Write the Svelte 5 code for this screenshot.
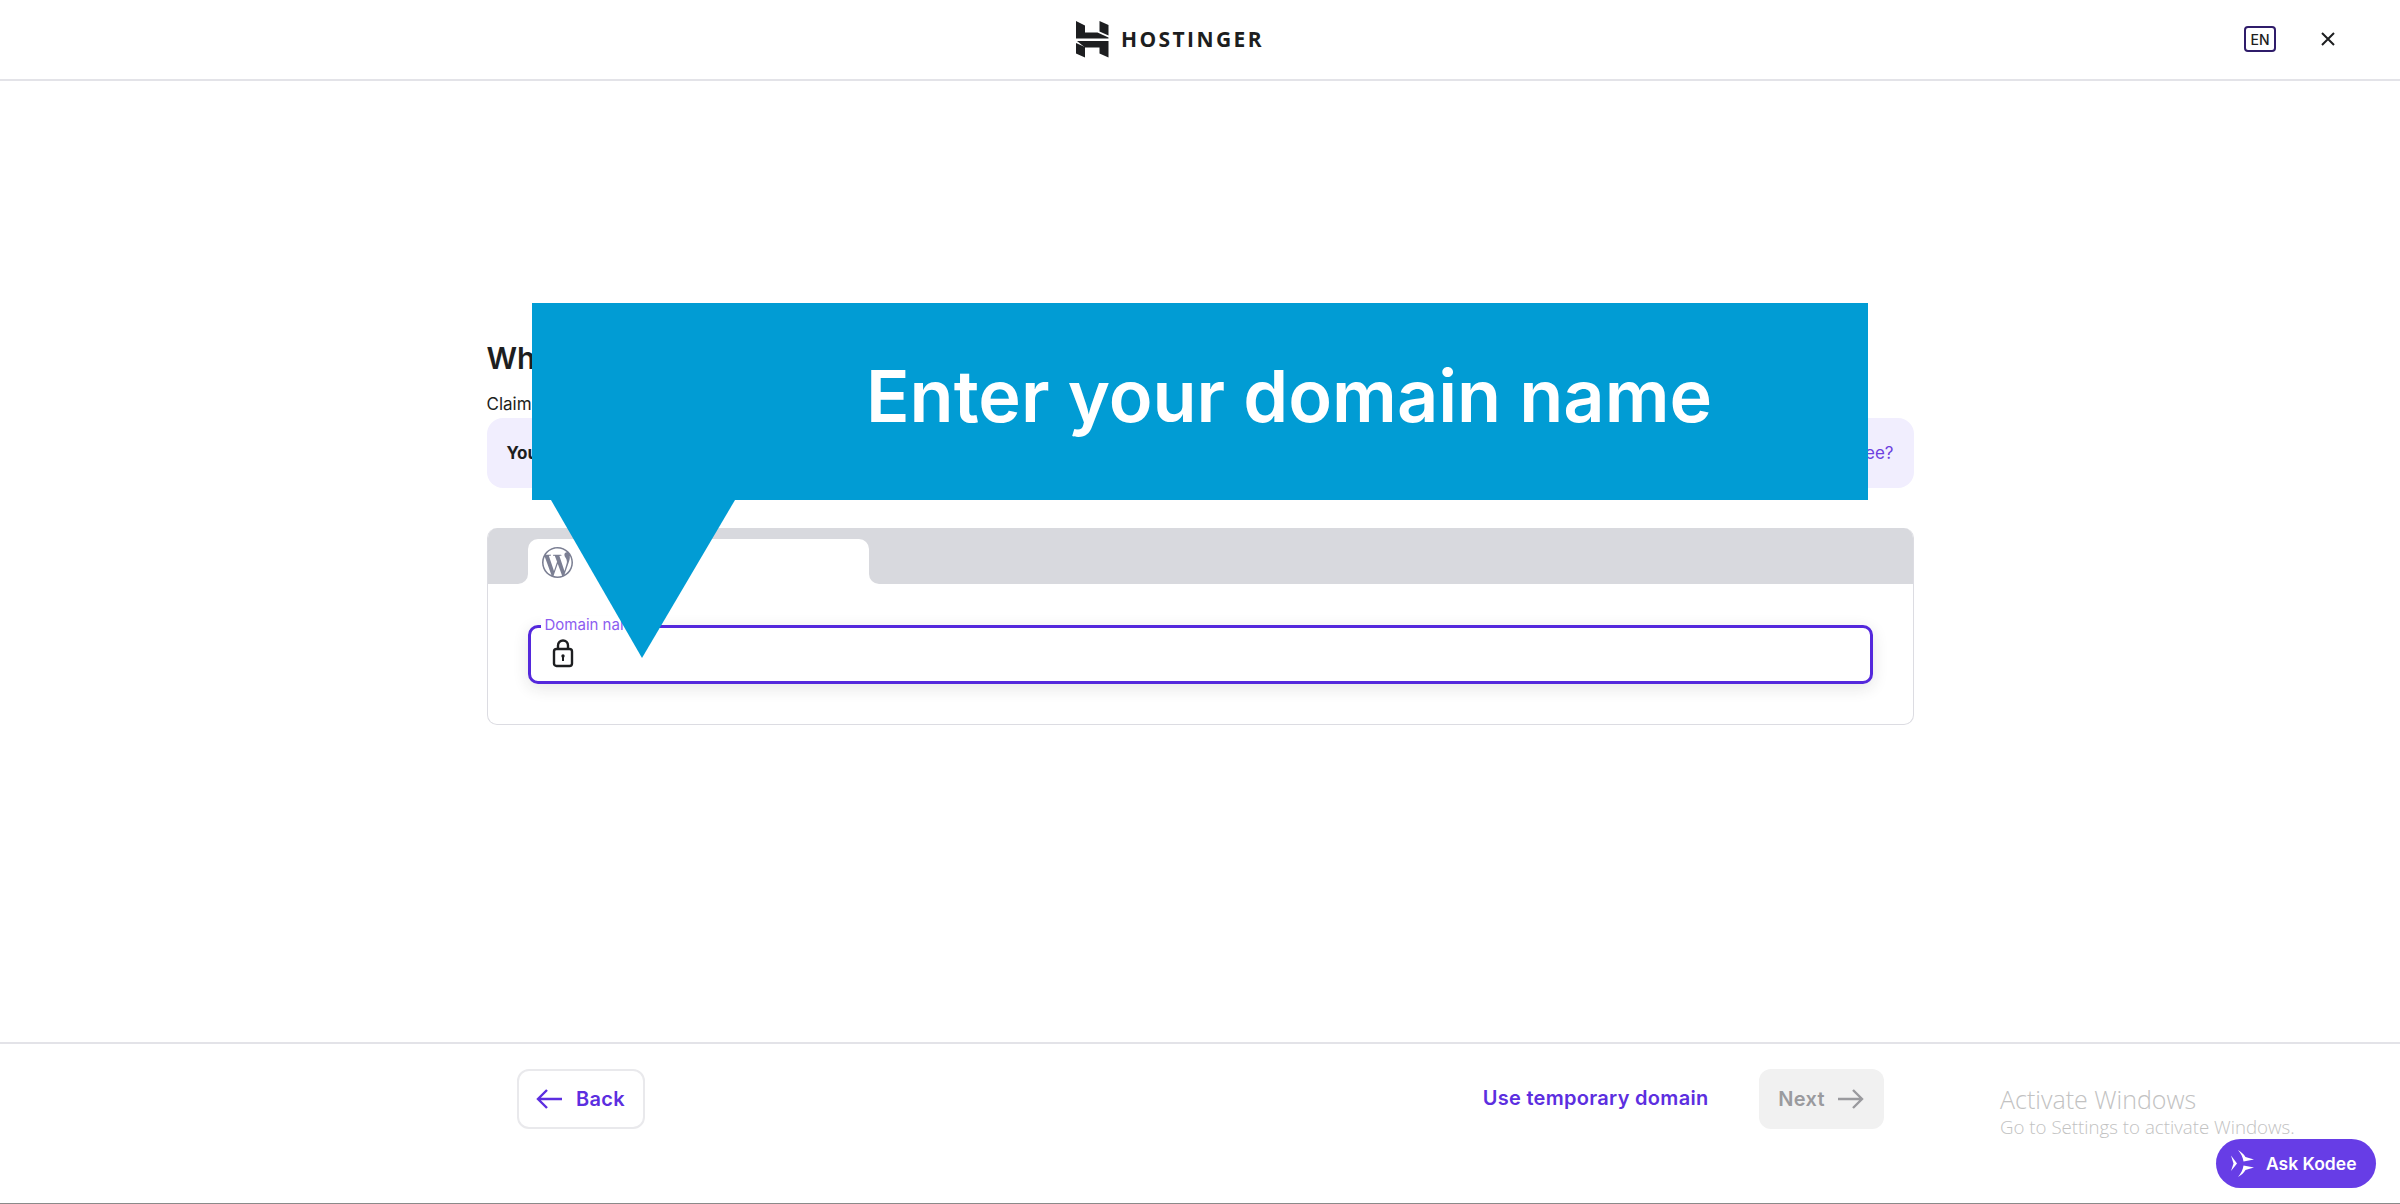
<script lang="ts">
  let domain: string = "";
</script>

<div class="page">
  <header>
    <div class="logo">
      <svg width="33" height="38" viewBox="0 0 33 38" aria-hidden="true">
        <path d="M0 1l9 4.500V12.500H21.500L32.500 17.500V18.500H0z" />
        <path d="M23.500 1L32.500 5V15.500L23.500 11.500z" />
        <path d="M1 21H32.500V37.500L23.500 33.500V27.500H9z" />
        <path d="M0 23L9 27V37.500L0 33.500z" />
      </svg>
      <span>HOSTINGER</span>
    </div>
    <div class="header-actions">
      <span class="lang">EN</span>
      <svg class="close" width="14" height="14" viewBox="0 0 14 14" aria-hidden="true">
        <path d="M1 1l12 12M13 1L1 13" />
      </svg>
    </div>
  </header>

  <main>
    <h1>What is your domain name?</h1>
    <p class="sub">Claim your free domain or connect one you own</p>

    <div class="notice">
      <strong>You have a free domain available</strong>
      <a href="#top">How to get a domain for free?</a>
    </div>

    <div class="card">
      <div class="tabs">
        <div class="tab-left"></div>
        <div class="tab-wrap">
          <div class="tab">
            <svg width="31" height="31" viewBox="0 0 24 24" aria-hidden="true">
              <path d="M21.469 6.825c.84 1.537 1.318 3.3 1.318 5.175 0 3.979-2.156 7.456-5.363 9.325l3.295-9.527c.615-1.54.82-2.771.82-3.864 0-.405-.026-.78-.07-1.11m-7.981.105c.647-.03 1.232-.105 1.232-.105.582-.075.514-.93-.067-.899 0 0-1.755.135-2.88.135-1.064 0-2.85-.15-2.85-.15-.585-.03-.661.855-.075.885 0 0 .54.061 1.125.09l1.68 4.605-2.37 7.08L5.354 6.9c.649-.03 1.234-.1 1.234-.1.585-.075.516-.93-.065-.896 0 0-1.746.138-2.874.138-.2 0-.438-.008-.69-.015C4.911 3.15 8.235 1.215 12 1.215c2.809 0 5.365 1.072 7.286 2.833-.046-.003-.091-.009-.141-.009-1.06 0-1.812.923-1.812 1.914 0 .89.513 1.643 1.06 2.531.411.72.89 1.643.89 2.977 0 .915-.354 1.994-.821 3.479l-1.075 3.585-3.9-11.61.001.014zM12 22.784c-1.059 0-2.081-.153-3.048-.437l3.237-9.406 3.315 9.087c.024.053.05.101.078.149-1.12.393-2.325.609-3.582.609M1.211 12c0-1.564.336-3.05.935-4.39L7.29 21.709C3.694 19.96 1.212 16.271 1.211 12M12 0C5.385 0 0 5.385 0 12s5.385 12 12 12 12-5.385 12-12S18.615 0 12 0" />
            </svg>
          </div>
        </div>
        <div class="tab-right"></div>
      </div>

      <div class="card-body">
        <label class="field">
          <span class="field-label">Domain name</span>
          <svg width="22" height="29" viewBox="0 0 22 29" aria-hidden="true">
            <rect x="2" y="10" width="18" height="17" rx="2.500" />
            <path class="shackle" d="M6 10V6.500a5 5 0 0 1 10 0V10" />
            <circle cx="11" cy="17" r="1.700" />
            <path class="key" d="M11 17v5" />
          </svg>
          <input bind:value={domain} />
        </label>
      </div>
    </div>
  </main>

  <footer>
    <div class="footer-inner">
      <button class="back">
        <svg width="27" height="22" viewBox="0 0 27 22" aria-hidden="true">
          <path d="M26 11H2M11 2l-9 9 9 9" />
        </svg>
        Back
      </button>
      <div class="footer-right">
        <button class="temp">Use temporary domain</button>
        <button class="next" disabled>
          Next
          <svg width="27" height="22" viewBox="0 0 27 22" aria-hidden="true">
            <path d="M1 11h24M16 2l9 9-9 9" />
          </svg>
        </button>
      </div>
    </div>
  </footer>

  <div class="callout">
    <div class="callout-box">Enter your domain name</div>
    <svg class="callout-tip" width="184" height="158" viewBox="0 0 184 158" aria-hidden="true">
      <path d="M0 0H184L91 158z" />
    </svg>
  </div>

  <div class="activate">
    <div class="activate-title">Activate Windows</div>
    <div class="activate-sub">Go to Settings to activate Windows.</div>
  </div>

  <button class="kodee">
    <svg width="23" height="27" viewBox="0 0 23 27" aria-hidden="true">
      <path d="M0 5.500L6 13.500 0 21 2.500 13.500z" />
      <path d="M7 0C10 2 13 4 14.500 7L23 9.500 12.500 11.500C12 7.500 10 3.500 7 0z" />
      <path d="M7 27C10 25 13 23 14.500 20L23 17.500 12.500 15.500C12 19.500 10 23.500 7 27z" />
    </svg>
    Ask Kodee
  </button>
</div>

<style>
  :global(body) {
    margin: 0;
    background: #fff;
  }

  .page {
    position: relative;
    display: flex;
    flex-direction: column;
    height: 1204px;
    box-sizing: border-box;
    border-bottom: 1px solid #8a8a8a;
    overflow: hidden;
    font-family: Inter, "Liberation Sans", sans-serif;
    color: #1d1e20;
  }

  header {
    position: relative;
    display: flex;
    align-items: center;
    justify-content: center;
    height: 81px;
    box-sizing: border-box;
    border-bottom: 2px solid #e3e3e8;
    flex-shrink: 0;
  }

  .logo {
    display: flex;
    align-items: center;
    gap: 12px;
    margin-left: -60px;
    margin-top: -1px;
  }

  .logo svg path {
    fill: #1d1e20;
  }

  .logo span {
    font-family: "Open Sans", sans-serif;
    font-weight: 700;
    font-size: 21px;
    letter-spacing: 2.400px;
  }

  .header-actions {
    position: absolute;
    right: 65px;
    top: 26px;
    display: flex;
    align-items: center;
    gap: 45px;
  }

  .lang {
    display: flex;
    align-items: center;
    justify-content: center;
    width: 32px;
    height: 26px;
    box-sizing: border-box;
    border: 2.500px solid #2f1c6a;
    border-radius: 4px;
    font-size: 14px;
    font-weight: 500;
  }

  .close path {
    fill: none;
    stroke: #1d1e20;
    stroke-width: 2;
  }

  main {
    flex: 1;
    width: 1427px;
    margin: 0 auto;
    padding-top: 257px;
  }

  h1 {
    margin: 0;
    font-size: 30px;
    line-height: 40px;
    font-weight: 600;
  }

  .sub {
    margin: 14px 0 0;
    font-size: 17px;
    line-height: 24px;
  }

  .notice {
    display: flex;
    align-items: center;
    justify-content: space-between;
    height: 70px;
    box-sizing: border-box;
    margin-top: 2px;
    padding: 0 20px;
    border-radius: 16px;
    background: #f1eefe;
    font-size: 17px;
  }

  .notice strong {
    font-weight: 700;
    color: #1d1e20;
  }

  .notice a {
    color: #6d3fe0;
    text-decoration: none;
  }

  .card {
    margin-top: 40px;
    height: 197px;
    box-sizing: border-box;
    border: 1.500px solid #dcdce2;
    border-top: 0;
    border-radius: 10px;
    overflow: hidden;
  }

  .tabs {
    display: flex;
    height: 56px;
  }

  .tab-left {
    width: 40px;
    background: #d8d9de;
    border-bottom-right-radius: 10px;
  }

  .tab-wrap {
    width: 341px;
    padding-top: 11px;
    background: #d8d9de;
  }

  .tab {
    display: flex;
    align-items: flex-start;
    height: 45px;
    box-sizing: border-box;
    padding: 8px 0 0 14px;
    background: #fff;
    border-radius: 10px 10px 0 0;
  }

  .tab svg path {
    fill: #7b7f93;
  }

  .tab-right {
    flex: 1;
    background: #d8d9de;
    border-bottom-left-radius: 10px;
  }

  .card-body {
    padding: 41px 40px 0 40px;
  }

  .field {
    position: relative;
    display: flex;
    align-items: center;
    height: 59px;
    box-sizing: border-box;
    padding-left: 21.500px;
    gap: 10px;
    border: 3px solid #5428dc;
    border-radius: 10px;
    background: #fff;
    box-shadow: 0 4px 16px rgba(29, 30, 32, 0.12);
  }

  .field svg {
    margin-top: -3px;
  }

  .field svg rect,
  .field svg .shackle {
    fill: none;
    stroke: #1d1e20;
    stroke-width: 2.400;
  }

  .field svg circle {
    fill: #1d1e20;
  }

  .field svg .key {
    fill: none;
    stroke: #1d1e20;
    stroke-width: 2;
  }

  .field-label {
    position: absolute;
    left: 10px;
    top: -12px;
    padding: 0 4px;
    background: #fff;
    color: #8c5cf0;
    font-size: 15px;
    line-height: 18px;
  }

  input {
    flex: 1;
    border: 0;
    outline: 0;
    background: transparent;
    font: inherit;
  }

  footer {
    height: 161px;
    box-sizing: border-box;
    border-top: 2px solid #e3e3e8;
    flex-shrink: 0;
  }

  .footer-inner {
    display: flex;
    align-items: flex-start;
    justify-content: space-between;
    width: 1367px;
    margin: 0 auto;
    padding-top: 25px;
  }

  .footer-right {
    display: flex;
    align-items: center;
    gap: 50px;
  }

  button {
    display: flex;
    align-items: center;
    height: 60px;
    box-sizing: border-box;
    padding-bottom: 2px;
    border: 0;
    background: transparent;
    font-family: Inter, "Liberation Sans", sans-serif;
    font-size: 20px;
    font-weight: 600;
    letter-spacing: 0.300px;
    color: #5c2ee0;
    cursor: pointer;
  }

  button svg path {
    fill: none;
    stroke: currentColor;
    stroke-width: 2.400;
  }

  .back {
    width: 128px;
    justify-content: center;
    gap: 13px;
    border: 2px solid #e9e9ec;
    border-radius: 12px;
  }

  .temp {
    padding: 0 0 2px;
    white-space: nowrap;
  }

  .next {
    width: 125px;
    justify-content: center;
    gap: 12px;
    border-radius: 12px;
    background: #f1f1f1;
    color: #9a9a9e;
    cursor: default;
  }

  .callout {
    position: absolute;
    left: 532px;
    top: 303px;
    width: 1336px;
  }

  .callout-box {
    display: flex;
    align-items: center;
    height: 197px;
    box-sizing: border-box;
    padding-left: 334px;
    padding-bottom: 13px;
    background: #019cd4;
    color: #fff;
    font-size: 72px;
    font-weight: 600;
    white-space: nowrap;
  }

  .callout-tip {
    display: block;
    margin-left: 19px;
  }

  .callout-tip path {
    fill: #019cd4;
  }

  .activate {
    position: absolute;
    left: 2000px;
    top: 1084px;
    font-family: "Open Sans", sans-serif;
    font-weight: 300;
    color: #c2c2c2;
    white-space: nowrap;
  }

  .activate-title {
    font-size: 25px;
    line-height: 30px;
  }

  .activate-sub {
    font-size: 18.700px;
    line-height: 25px;
  }

  .kodee {
    position: absolute;
    left: 2216px;
    top: 1139px;
    width: 160px;
    height: 49px;
    padding: 0 0 0 15px;
    justify-content: flex-start;
    gap: 12px;
    border-radius: 25px;
    background: #673de6;
    color: #fff;
    font-size: 17.500px;
    letter-spacing: 0;
  }

  .kodee svg path {
    fill: #fff;
    stroke: none;
  }
</style>
